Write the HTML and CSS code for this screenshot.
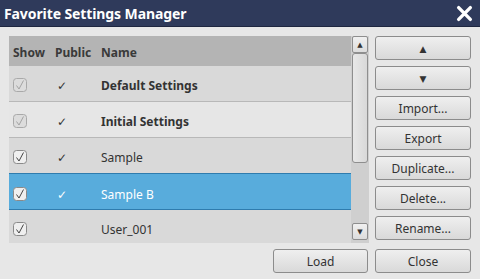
FILE: index.html
```html
<!DOCTYPE html>
<html lang="en">
<head>
  <meta charset="UTF-8"/>
  <title>Favorite Settings Manager</title>
  <link rel="stylesheet" href="styles.css">
</head>
<body>
  <div class="window">
    <!-- title bar -->
    <div class="titlebar">
      <span class="title">Favorite Settings Manager</span>
      <svg class="close" viewBox="0 0 16 16"><path d="M2.5 2.5L13.5 13.5M13.5 2.5L2.5 13.5" /></svg>
    </div>

    <div class="content">
      <div class="main">
        <div class="list">
          <div class="table">
            <div class="row head">
              <span class="c-show">Show</span><span class="c-pub">Public</span><span class="c-name">Name</span>
            </div>
            <div class="row dark">
              <span class="c-show"><svg class="chk off" viewBox="0 0 14 14"><rect x=".5" y=".5" width="13" height="13" rx="3"/><path d="M3.5 7.5L6 11L10.5 2.5"/></svg></span><span class="c-pub">✓</span><span class="c-name bold">Default Settings</span>
            </div>
            <div class="row light">
              <span class="c-show"><svg class="chk off" viewBox="0 0 14 14"><rect x=".5" y=".5" width="13" height="13" rx="3"/><path d="M3.5 7.5L6 11L10.5 2.5"/></svg></span><span class="c-pub">✓</span><span class="c-name bold">Initial Settings</span>
            </div>
            <div class="row dark">
              <span class="c-show"><svg class="chk" viewBox="0 0 14 14"><rect x=".5" y=".5" width="13" height="13" rx="3"/><path d="M3.5 7.5L6 11L10.5 2.5"/></svg></span><span class="c-pub">✓</span><span class="c-name">Sample</span>
            </div>
            <div class="row sel">
              <span class="c-show"><svg class="chk" viewBox="0 0 14 14"><rect x=".5" y=".5" width="13" height="13" rx="3"/><path d="M3.5 7.5L6 11L10.5 2.5"/></svg></span><span class="c-pub">✓</span><span class="c-name">Sample B</span>
            </div>
            <div class="row dark">
              <span class="c-show"><svg class="chk" viewBox="0 0 14 14"><rect x=".5" y=".5" width="13" height="13" rx="3"/><path d="M3.5 7.5L6 11L10.5 2.5"/></svg></span><span class="c-pub"></span><span class="c-name">User_001</span>
            </div>
          </div>
          <div class="scrollbar">
            <div class="sb-btn">▲</div>
            <div class="sb-thumb"></div>
            <div class="sb-gap"></div>
            <div class="sb-btn">▼</div>
          </div>
        </div>
        <div class="side">
          <button class="btn arrow">▲</button>
          <button class="btn arrow">▼</button>
          <button class="btn">Import...</button>
          <button class="btn">Export</button>
          <button class="btn">Duplicate...</button>
          <button class="btn">Delete...</button>
          <button class="btn">Rename...</button>
        </div>
      </div>
      <div class="footer">
        <button class="btn load">Load</button>
        <button class="btn">Close</button>
      </div>
    </div>
  </div>
</body>
</html>
```

FILE: styles.css
```css
*{margin:0;padding:0;box-sizing:border-box}
body{font-family:'Noto Sans','DejaVu Sans',sans-serif;background:#e7e7e7;color:#333;width:480px;height:279px;overflow:hidden}
.window{width:480px;height:279px;display:flex;flex-direction:column}
.titlebar{height:27px;background:#2f3a5b;border-bottom:1px solid #1e2640;display:flex;align-items:center;padding:0 7px 0 4px}
.title{color:#fff;font-weight:700;font-size:14px;letter-spacing:-.1px}
.close{width:17px;height:17px;margin-left:auto;stroke:#fff;stroke-width:3.2;stroke-linecap:round;fill:none}
.content{padding:9px 9px 0 9px;display:flex;flex-direction:column}
.main{display:flex;gap:6px}
.list{display:flex;height:207px;width:360px}
.table{width:342px;height:207px;overflow:hidden;background:#dadada}
.row{display:flex;align-items:center;height:36px;font-size:12px;border-bottom:1px solid #b8b8b8;padding-top:4px}
.row.head{height:30px;background:#b4b4b4;font-weight:700;color:#3a3a3a;border-bottom:none;padding-top:3px}
.row.dark{background:#d9d9d9}
.row.light{background:#e6e6e6}
.row.sel{background:#58acdc;color:#fff;border-top:1px solid #2f7cae;border-bottom:1px solid #2f7cae;margin-top:-1px;height:37px;padding-top:5px}
.c-show{width:46px;padding-left:4px;display:flex}
.c-pub{width:46px;padding-left:2px;font-size:12px}
.head .c-pub{padding-left:0}
.c-name{flex:1}
.bold{font-weight:700}
.chk{width:14px;height:14px;display:block;margin-top:-1px}
.chk rect{fill:#efefef;stroke:#8a8a8a}
.chk path{fill:none;stroke:#444;stroke-width:1}
.chk.off rect{fill:#dcdcdc;stroke:#a9a9a9}
.chk.off path{stroke:#a3a3a3}
.scrollbar{width:18px;background:#cfcfcf;display:flex;flex-direction:column;padding:0 1px 3px}
.sb-btn{height:17px;border:1px solid #8e8e8e;border-radius:2px;background:linear-gradient(#f0f0f0,#dcdcdc);font-size:7px;line-height:15px;text-align:center;color:#333}
.sb-thumb{height:110px;border:1px solid #8e8e8e;border-radius:3px;background:linear-gradient(90deg,#e8e8e8,#d8d8d8)}
.sb-gap{flex:1}
.side{display:flex;flex-direction:column;gap:6px}
.btn{width:96px;height:24px;border:1px solid #8c8c8c;border-radius:3px;background:linear-gradient(#efefef,#d9d9d9);font:12px 'Noto Sans','DejaVu Sans',sans-serif;color:#333;padding-top:1px}
.btn.arrow{font-size:9px}
.footer{display:flex;justify-content:flex-end;gap:7px;margin-top:6px}
.btn.load{width:95px}
```
